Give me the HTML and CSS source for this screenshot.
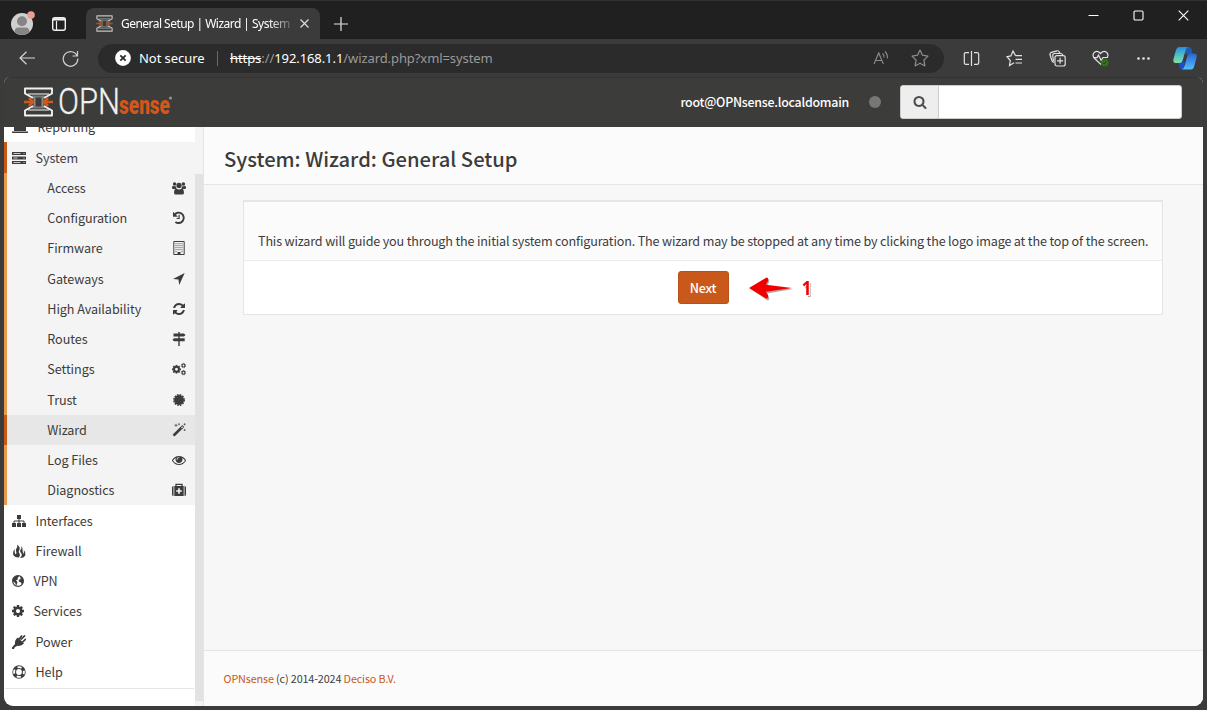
FILE: index.html
```html
<!DOCTYPE html>
<html lang="en">
<head>
<meta charset="utf-8">
<title>General Setup | Wizard | System</title>
<link rel="stylesheet" href="styles.css">
</head>
<body>
<svg class="defs" aria-hidden="true">
  <symbol id="mark" viewBox="0 0 29 30">
    <g fill="none">
      <path d="M4 7h21M4 23h21" stroke="#9a9a98" stroke-width="2.200"/>
      <path d="M8 9.500h13M8 20.500h13" stroke="#767674" stroke-width="2"/>
      <path d="M10.500 10v10M18.500 10v10" stroke="#8a8a88" stroke-width="2"/>
      <path d="M9 11 1 6.500V1.500h27v5L20 11M9 19l-8 4.500v5h27v-5L20 19" stroke="#f1f1f1" stroke-width="1.900" stroke-linejoin="round"/>
      <path d="M0 15h8M5 11l4 4-4 4M29 15h-8M24 11l-4 4 4 4" stroke="#d2571b" stroke-width="2.500"/>
    </g>
  </symbol>
  <symbol id="server" viewBox="0 0 14 14"><path d="M0 1h14v3H0zM0 5.500h14v3H0zM0 10h14v3H0z"/><path d="M1.500 2.500h7M1.500 7h4M1.500 11.500h7M11.500 2.500h1M11.500 7h1M11.500 11.500h1" stroke="#eee" stroke-width=".8"/></symbol>
  <symbol id="laptop" viewBox="0 0 16 14"><path d="M2 0h12v11H2zM0 11.500h16v1.500H0z"/></symbol>
  <symbol id="users" viewBox="0 0 15 14"><circle cx="2.800" cy="2.800" r="1.900"/><circle cx="12.200" cy="2.800" r="1.900"/><circle cx="7.500" cy="4.300" r="2.800"/><path d="M0 7q0-2.500 1.300-2.500 1.500 1 2.700.4Q4 6.500 5 7.300L3.500 8H1Q0 8 0 7zM15 7q0-2.500-1.300-2.500-1.500 1-2.700.4 0 1.600-1 2.400l1.500.7H14q1 0 1-1zM4.500 7.500q3 2 6 0Q12.800 8 12.800 12q0 2-1.800 2H4q-1.800 0-1.800-2 0-4 2.300-4.500z"/></symbol>
  <symbol id="history" viewBox="0 0 14 14"><path d="M2.200 4A5.200 5.200 0 1 1 3.400 11" fill="none" stroke="#3c3c3b" stroke-width="1.900"/><path d="M1 .8v5h5zM6.500 3.800h1.200v4.300H4.600V6.900h1.900z"/></symbol>
  <symbol id="building" viewBox="0 0 14 14"><path d="M1.800.5h10.400v13H1.800z" fill="none" stroke="#3c3c3b"/><path d="M4 2v9.500M6 2v8M8 2v8M10 2v9.500" stroke="#3c3c3b" stroke-width=".8" stroke-dasharray="1.200 .8"/><path d="M5.500 11h3v3h-3z"/></symbol>
  <symbol id="arrow" viewBox="0 0 14 14"><path d="M12.700 1 7.200 13 6.500 7.500 1 7z"/></symbol>
  <symbol id="refresh" viewBox="0 0 1792 1792"><path d="M1639 1056q0 5-1 7-64 268-268 434.500t-478 166.500q-146 0-282.500-55t-243.500-157l-129 129q-19 19-45 19t-45-19-19-45v-448q0-26 19-45t45-19h448q26 0 45 19t19 45-19 45l-137 137q71 66 161 102t187 36q134 0 250-65t186-179q11-17 53-117 8-23 30-23h192q13 0 22.500 9.500t9.500 22.500zm25-800v448q0 26-19 45t-45 19h-448q-26 0-45-19t-19-45 19-45l138-138q-148-137-349-137-134 0-250 65t-186 179q-11 17-53 117-8 23-30 23h-199q-13 0-22.500-9.500t-9.500-22.500v-7q65-268 270-434.500t480-166.500q146 0 284 55.500t245 156.500l130-129q19-19 45-19t45 19 19 45z"/></symbol>
  <symbol id="signs" viewBox="0 0 14 14"><path d="M6.300 0h1.400v14H6.300zM1.500 1.500h10.500l1.500 1.500L12 4.500H1.500zM2 6.300h10.700v3H2L.5 7.800z"/></symbol>
  <symbol id="cog" viewBox="128 128 1536 1536"><path d="M1152 896q0-106-75-181t-181-75-181 75-75 181 75 181 181 75 181-75 75-181zm512-109v222q0 12-8 23t-20 13l-185 28q-19 54-39 91 35 50 107 138 10 12 10 25t-9 23q-27 37-99 108t-94 71q-12 0-26-9l-138-108q-44 23-91 38-16 136-29 186-7 28-36 28h-222q-14 0-24.500-8.500t-11.500-21.500l-28-184q-49-16-90-37l-141 107q-10 9-25 9-14 0-25-11-126-114-165-168-7-10-7-23 0-12 8-23 15-21 51-66.500t54-70.500q-27-50-41-99l-183-27q-13-2-21-12.500t-8-23.500v-222q0-12 8-23t19-13l186-28q14-46 39-92-40-57-107-138-10-12-10-24 0-10 9-23 26-36 98.500-107.500t94.500-71.500q13 0 26 10l138 107q44-23 91-38 16-136 29-186 7-28 36-28h222q14 0 24.500 8.500t11.500 21.500l28 184q49 16 90 37l142-107q9-9 24-9 13 0 25 10 129 119 165 170 7 8 7 22 0 12-8 23-15 21-51 66.500t-54 70.500q26 50 41 98l183 28q13 2 21 12.500t8 23.500z"/></symbol>
  <symbol id="cogs" viewBox="0 0 15 14"><use href="#cog" x="0" y="2.500" width="9.600" height="9.600"/><g fill="none" stroke="#3c3c3b"><circle cx="12.300" cy="3.300" r="1.600" stroke-width="1.200"/><circle cx="12.300" cy="10.900" r="1.600" stroke-width="1.200"/><circle cx="12.300" cy="3.300" r="2.400" stroke-width=".8" stroke-dasharray="1 .9"/><circle cx="12.300" cy="10.900" r="2.400" stroke-width=".8" stroke-dasharray="1 .9"/></g></symbol>
  <symbol id="cert" viewBox="0 0 14 14"><circle cx="7" cy="7" r="5"/><circle cx="7" cy="7" r="5.300" fill="none" stroke="#3c3c3b" stroke-width="1.300" stroke-dasharray="1.700 1.075"/></symbol>
  <symbol id="wand" viewBox="0 0 14 14"><path d="M.6 11.800 10.300 2l1.900 1.900L2.500 13.600z"/><path d="m9 4.500 1.300-1.200.8.800-1.200 1.200z" fill="#e8e8e8"/><path d="M4 .8v3M2.500 2.300h3M7 .3v1.800M6.200 1.200h1.700M12.600.3v2M11.600 1.300h2M12.600 6v2M11.600 7h2" stroke="#3c3c3b" stroke-width=".7"/></symbol>
  <symbol id="eye" viewBox="0 0 1792 1792"><path d="M1664 960q-152-236-381-353 61 104 61 225 0 185-131.500 316.500t-316.500 131.500-316.500-131.500-131.500-316.500q0-121 61-225-229 117-381 353 133 205 333.500 326.500t434.500 121.500 434.500-121.500 333.500-326.500zm-720-384q0-20-14-34t-34-14q-125 0-214.500 89.500t-89.500 214.500q0 20 14 34t34 14 34-14 14-34q0-86 61-147t147-61q20 0 34-14t14-34zm848 384q0 34-20 69-140 230-376.500 368.500t-499.500 138.500-499.500-139-376.500-368q-20-35-20-69t20-69q140-229 376.500-368t499.500-139 499.500 139 376.500 368q20 35 20 69z"/></symbol>
  <symbol id="medkit" viewBox="0 0 14 14"><path d="M4 3.500V1.300h6v2.200" fill="none" stroke="#3c3c3b" stroke-width="1.300"/><path d="M1.500 3v10Q0 13 0 11.500v-7Q0 3 1.500 3zM12.500 3v10q1.500 0 1.500-1.500v-7Q14 3 12.500 3zM2.300 3h9.400v10H2.300z"/><path d="M7 5.200v5.600M4.200 8h5.600" stroke="#f4f4f4" stroke-width="1.700"/></symbol>
  <symbol id="sitemap" viewBox="0 0 14 14"><path d="M5 1h4v4H5zM0 9h4v4H0zM5 9h4v4H5zM10 9h4v4h-4z"/><path d="M7 4v6M2 10V7h10v3" fill="none" stroke="#3c3c3b"/></symbol>
  <symbol id="fire" viewBox="0 0 14 14"><path d="M5 .5Q8.500 3 7.500 5.500 6 8 7.500 9.500 8.700 11 7 13.500 2 13.500 1 10 .5 7 3 5q-1 4 .8 5.500Q5 9 4 7 3.600 5 5 3.500 5.800 2 5 .5z"/><path d="M9 2q2 1.500 1.500 4 .1 2 1 4 1-1.500.2-4Q14 8 13.400 11q-1 3-5.400 3Q11 11 9 9q-2-2 .4-4.500Q9.700 3 9 2z"/></symbol>
  <symbol id="globe" viewBox="0 0 12 14"><circle cx="6" cy="7" r="5.400" fill="#fff" stroke="#3c3c3b" stroke-width="1.200"/><path d="M.7 5Q2 2 6 1.500l1 1L5.500 4 6 5.200 4 6.500 5.500 8 4.800 10.500 4 12 3.200 9 1 7.500zM8 1.500l3 3L11.500 8 10 11l-1-2.500-2-.7L6.700 6l2-1z"/></symbol>
  <symbol id="plug" viewBox="0 0 14 14"><path d="m9.200 4.200 3.300-3.300M10.800 6.800l2.700-2.500M7.700 3.500 9.500 1" stroke="#3c3c3b" stroke-width="1.600" stroke-linecap="round"/><path d="m6 2.500 6 6Q9 11.500 5.500 10.800L2.800 12.300 2 14H0v-1.500L3 9Q2.300 5 6 2.500z"/></symbol>
  <symbol id="ring" viewBox="0 0 14 14"><circle cx="7" cy="7" r="4.800" fill="none" stroke="#3c3c3b" stroke-width="3.800"/><circle cx="7" cy="7" r="4.900" fill="none" stroke="#fff" stroke-width="1.900" stroke-dasharray="4.200 3.497" stroke-dashoffset="2.100"/></symbol>
  <symbol id="search" viewBox="0 0 1792 1792"><path d="M1216 832q0-185-131.500-316.500T768 384 451.500 515.500 320 832t131.500 316.500T768 1280t316.500-131.500T1216 832zm512 832q0 52-38 90t-90 38q-54 0-90-38l-343-342q-179 124-399 124-143 0-273.500-55.500t-225-150-150-225T64 832t55.500-273.500 150-225 225-150T768 128t273.500 55.500 225 150 150 225T1472 832q0 220-124 399l343 343q37 37 37 90z"/></symbol>
</svg>

<div class="window">
  <div class="tabstrip">
    <svg class="avatar" viewBox="0 0 24 24"><circle cx="11" cy="13" r="11" fill="#d0d0d0"/><circle cx="11" cy="10.200" r="5" fill="#858585"/><path d="M3.500 21q0-4.500 4-4.500h7q4 0 4 4.500a11 11 0 0 1-15 0z" fill="#858585"/><circle cx="20" cy="4" r="3.800" fill="#ee9d94"/></svg>
    <svg class="spaces" viewBox="0 0 14 14" fill="none" stroke="#f0f0f0"><rect x=".7" y=".7" width="12.600" height="12.600" rx="2" stroke-width="1.400"/><path d="M1 2.300h12" stroke-width="2.400"/><path d="M4.500 4v9" stroke-width="1.200"/></svg>
    <div class="tab">
      <svg class="favicon"><use href="#mark"/></svg>
      <span class="tab-title">General Setup | Wizard | System |</span>
      <svg class="tab-close" viewBox="0 0 9 9"><path d="M.5.5l8 8M8.500.5l-8 8" stroke="#ddd" stroke-width="1.200"/></svg>
    </div>
    <svg class="newtab" viewBox="0 0 14 14"><path d="M7 0v14M0 7h14" stroke="#e6e6e6" stroke-width="1.200"/></svg>
    <div class="controls">
      <svg viewBox="0 0 11 11"><path d="M.5 5.500h10" stroke="#fff"/></svg>
      <svg viewBox="0 0 11 11"><rect x="1" y="1" width="9" height="9" rx="1.200" fill="none" stroke="#fff" stroke-width="1.100"/></svg>
      <svg viewBox="0 0 11 11"><path d="M.7.7l9.600 9.600M10.300.7.7 10.300" stroke="#fff" stroke-width="1.100"/></svg>
    </div>
  </div>

  <div class="toolbar">
    <svg class="back" viewBox="0 0 17 14" fill="none" stroke="#d5d5d5" stroke-width="1.200"><path d="M16 7H1M7.500.7 1 7l6.500 6.300"/></svg>
    <svg class="reload" viewBox="0 0 17 17" fill="none" stroke="#d0d0d0" stroke-width="1.200"><path d="M15.200 6A7.300 7.300 0 1 0 15.800 8.500M15.500 1v5h-5"/></svg>
    <div class="address">
      <svg class="insecure" viewBox="0 0 16 16"><circle cx="8" cy="8" r="7.900" fill="#fff"/><path d="m5.300 5.300 5.400 5.400M10.700 5.300l-5.400 5.400" stroke="#2b2b2b" stroke-width="1.800"/></svg>
      <span class="secure-text">Not secure</span>
      <span class="divider"></span>
      <span class="url"><s>https</s><i>://</i>192.168.1.1<i>/wizard.php?xml=system</i></span>
      <svg class="read" viewBox="0 0 16 16" fill="none" stroke="#8c8c8c" stroke-width="1.100"><path d="M1 14 5.700 3l4.700 11M2.700 10.500h6M9.500 3.500q2 1.500 1.500 4M12 1.500q3 3 2.300 7"/></svg>
      <svg class="star" viewBox="0 0 17 17" fill="none" stroke="#8c8c8c" stroke-width="1.200" stroke-linejoin="round"><path d="m8.500 1 2.300 4.900 5.200.8-3.800 3.800.9 5.500-4.600-2.600L3.900 16l.9-5.500L1 6.700l5.200-.8z"/></svg>
    </div>
    <div class="tools">
      <svg viewBox="0 0 17 17" fill="none" stroke="#e2e2e2" stroke-width="1.200"><path d="M6 2.600H3Q1.300 2.600 1.300 4.300v8.400q0 1.700 1.700 1.700h3M11 2.600h3q1.700 0 1.700 1.700v8.400q0 1.700-1.700 1.700h-3M8.500 1v15"/></svg>
      <svg viewBox="0 0 17 17" fill="none" stroke="#e2e2e2" stroke-width="1.200"><path d="M9.500 5.600 7 1 4.900 5.900 1 6.700l3.300 3.800-.8 5L8 12.800M9.500 5.600H16M9.500 9.300H16M9.500 13H16"/></svg>
      <svg viewBox="0 0 17 17" fill="none" stroke="#e2e2e2" stroke-width="1.200"><rect x="6" y="5.600" width="10.200" height="10.400" rx="2"/><path d="M11.100 7.800v6M8.100 10.800h6M5 12.300Q3.400 12 2.900 10.500L1 4.800Q.7 3 2.400 2.400L8 .8q1.700-.3 2.400 1.400l.4 1.300M4.500 11 3.700 5.500q0-2 2-2h6q1.500 0 2 1.500"/></svg>
      <svg viewBox="0 0 17 17" fill="none" stroke="#e2e2e2" stroke-width="1.200"><path d="M9 14.500 2.300 8.300M1.500 7Q.2 4 2.500 2.200q3-2 6 1.300 3-3.300 6-1.300Q17 4.500 15.200 7.500M1 7.700h4L6.500 5l2.700 5.500 1.800-3h5"/><circle cx="12.700" cy="12.700" r="3.800" fill="#2e7315" stroke="none"/><path d="m11 12.800 1.200 1.100 2-2.400" stroke="#1b3b10" stroke-width=".8"/></svg>
      <svg viewBox="0 0 17 17" fill="#e7e7e7"><circle cx="3.500" cy="8.500" r="1.300"/><circle cx="8.500" cy="8.500" r="1.300"/><circle cx="13.500" cy="8.500" r="1.300"/></svg>
    </div>
    <svg class="copilot" viewBox="0 0 24 23">
      <defs><linearGradient id="ca" x1="0" y1="0" x2="0" y2="1"><stop offset="0" stop-color="#2a8de0"/><stop offset=".6" stop-color="#58c8c5"/><stop offset="1" stop-color="#8ade94"/></linearGradient><linearGradient id="cb" x1="0" y1="0" x2="0" y2="1"><stop offset="0" stop-color="#2864da"/><stop offset="1" stop-color="#55bff8"/></linearGradient></defs>
      <path d="M5 15h7l-2 7q-2 .5-3-1z" fill="#1b4fd1"/><path d="M13 0h3q2 0 2.500 2l1 5h-8z" fill="#1e5cb0"/>
      <path d="M6 0h9q-2 1-3 5L9.500 14q-.8 2-3 2H2.500q-3 0-2-4L3 3Q4 0 6 0z" fill="url(#ca)"/>
      <path d="M17.500 6.500h4q3 0 2 4L21 20q-1 2.500-3 2.500H9q2-1 3-5l2.500-9q.8-2 3-2z" fill="url(#cb)"/>
    </svg>
  </div>

  <div class="page">
    <header class="header">
      <svg class="logo" viewBox="0 0 150 32">
        <use href="#mark" x="0" y="1" width="29" height="30"/>
        <text class="logo-opn" x="34" y="28" textLength="62" lengthAdjust="spacingAndGlyphs">OPN</text>
        <text class="logo-sense" x="95" y="28" textLength="51" lengthAdjust="spacingAndGlyphs">sense</text>
        <circle cx="146.500" cy="12" r="1.600" fill="#92928f"/>
      </svg>
      <span class="user">root@OPNsense.localdomain</span>
      <span class="status"></span>
      <div class="searchbox"><span class="search-btn"><svg><use href="#search"/></svg></span></div>
    </header>
    <div class="body">
      <aside class="sidebar">
        <nav class="menu">
          <div class="item reporting"><svg><use href="#laptop"/></svg><span>Reporting</span></div>
          <div class="item active"><svg><use href="#server"/></svg><span>System</span></div>
          <div class="submenu">
            <div class="sub"><span>Access</span><svg><use href="#users"/></svg></div>
            <div class="sub"><span>Configuration</span><svg><use href="#history"/></svg></div>
            <div class="sub"><span>Firmware</span><svg><use href="#building"/></svg></div>
            <div class="sub"><span>Gateways</span><svg><use href="#arrow"/></svg></div>
            <div class="sub"><span>High Availability</span><svg><use href="#refresh"/></svg></div>
            <div class="sub"><span>Routes</span><svg><use href="#signs"/></svg></div>
            <div class="sub"><span>Settings</span><svg><use href="#cogs"/></svg></div>
            <div class="sub"><span>Trust</span><svg><use href="#cert"/></svg></div>
            <div class="sub current"><span>Wizard</span><svg><use href="#wand"/></svg></div>
            <div class="sub"><span>Log Files</span><svg><use href="#eye"/></svg></div>
            <div class="sub"><span>Diagnostics</span><svg><use href="#medkit"/></svg></div>
          </div>
          <div class="item"><svg><use href="#sitemap"/></svg><span>Interfaces</span></div>
          <div class="item"><svg><use href="#fire"/></svg><span>Firewall</span></div>
          <div class="item narrow"><svg><use href="#globe"/></svg><span>VPN</span></div>
          <div class="item narrow"><svg><use href="#cog"/></svg><span>Services</span></div>
          <div class="item"><svg><use href="#plug"/></svg><span>Power</span></div>
          <div class="item"><svg><use href="#ring"/></svg><span>Help</span></div>
          <div class="rule"></div>
        </nav>
        <div class="scroll"><div class="thumb"></div></div>
      </aside>
      <main class="main">
        <div class="heading"><h1>System: Wizard: General Setup</h1></div>
        <div class="content">
          <section class="panel">
            <p class="intro">This wizard will guide you through the initial system configuration. The wizard may be stopped at any time by clicking the logo image at the top of the screen.</p>
            <div class="actions">
              <button class="next">Next</button>
              <div class="callout">
                <svg class="red-arrow" viewBox="0 0 46 26"><path d="M2 13 19 3q2 0 1.500 3l-2 4 26 3-26 4.500 2 4q.5 3-1.500 3z" fill="#777" transform="translate(.7 1)" opacity=".6"/><path d="M1 13 18.500 2.500q2.500 0 1.500 3.500L18 9.800l26 3.200-26 3.800 2 3.500q.5 3-1.500 3.500z" fill="#f20000"/></svg>
                <span class="num">1</span>
              </div>
            </div>
          </section>
        </div>
        <footer class="footer"><a>OPNsense</a> (c) 2014-2024 <a>Deciso B.V.</a></footer>
      </main>
    </div>
  </div>
</div>
</body>
</html>
```
FILE: styles.css
```css
* { box-sizing: border-box; }
body { margin: 0; }
svg { display: block; flex: none; }
.defs { position: absolute; width: 0; height: 0; }

.window {
  width: 1207px; height: 710px; overflow: hidden;
  display: flex; flex-direction: column;
  background: #3b3b3b; border-top: 1px solid #303234;
  font-family: "Noto Sans", "Open Sans", sans-serif; color: #fff;
}

/* Browser frame */
.tabstrip { height: 38px; background: #202020; display: flex; align-items: center; padding: 7px 0 0 11px; }
.avatar { width: 24px; height: 24px; margin-top: -1px; }
.spaces { width: 14px; height: 14px; margin: 1px 0 0 17px; }
.tab {
  width: 234px; height: 31px; margin-left: 20px; padding: 0 11px 0 10px;
  display: flex; align-items: center; background: #3b3b3b; border-radius: 8px 8px 0 0;
}
.favicon { width: 17px; height: 17px; opacity: .75; }
.tab-title {
  margin-left: 8px; width: 171px; overflow: hidden; white-space: nowrap;
  font-size: 12px; letter-spacing: -.53px; line-height: 18px;
  -webkit-mask-image: linear-gradient(90deg, #000 148px, rgba(0,0,0,.2) 170px);
  mask-image: linear-gradient(90deg, #000 148px, rgba(0,0,0,.2) 170px);
}
.tab-close { width: 9px; height: 9px; margin-left: 8px; }
.newtab { width: 14px; height: 14px; margin-left: 14px; }
.controls { margin: -17px 18px 0 auto; display: flex; gap: 34px; }
.controls svg { width: 11px; height: 11px; }

.toolbar { height: 38px; display: flex; align-items: center; padding-left: 19px; }
.back { width: 17px; height: 14px; }
.reload { width: 17px; height: 17px; margin-left: 26px; }
.address {
  width: 846px; height: 29px; margin-left: 19px; padding: 0 15px 0 17px; border-radius: 15px;
  background: #2b2b2b; display: flex; align-items: center; font-size: 13px; line-height: 20px; white-space: nowrap;
}
.insecure { width: 16px; height: 16px; }
.secure-text { margin-left: 8px; width: 66px; letter-spacing: -.05px; }
.divider { width: 1px; height: 15px; margin: 0 12px; background: #696969; }
.url { letter-spacing: -.08px; }
.url i { font-style: normal; color: #9a9a9a; }
.read { width: 16px; height: 16px; margin-left: auto; }
.star { width: 18px; height: 18px; margin-left: 22px; }
.tools { display: flex; gap: 26px; margin-left: 19px; }
.tools svg { width: 17px; height: 17px; }
.copilot { width: 24px; height: 23px; margin-left: 21px; }

/* Web page */
.page {
  width: 1199px; height: 629px; margin-left: 4px; overflow: hidden;
  display: flex; flex-direction: column; border-radius: 6px 6px 9px 9px;
  font-family: "Noto Sans CJK SC", "Source Sans Pro", sans-serif; color: #3c3c3b; background: #fff;
}
.header { height: 50px; flex: none; display: flex; align-items: center; background: #3c3c3b; border-top: 1px solid #333; padding: 0 21px 1px 20px; }
.logo { width: 150px; height: 32px; }
.logo-opn { font: 300 36px Roboto, sans-serif; fill: #f1f1f1; stroke: #f1f1f1; stroke-width: .3px; }
.logo-sense { font: 900 25px Roboto, sans-serif; fill: #d2571b; }
.user { margin-left: auto; color: #fff; font-size: 12.4px; font-weight: 500; line-height: 20px; letter-spacing: -.24px; }
.status { width: 12px; height: 12px; border-radius: 50%; background: #777; margin: 0 19px 0 20px; }
.searchbox { width: 282px; height: 34px; background: #fff; border: 1px solid #ccc; border-radius: 3px; display: flex; overflow: hidden; }
.search-btn { width: 38px; background: #eee; border-right: 1px solid #ccc; display: flex; align-items: center; justify-content: center; }
.search-btn svg { width: 14px; height: 14px; fill: #4d4d4c; }

.body { flex: 1; min-height: 0; display: flex; }
.sidebar { width: 200px; flex: none; display: flex; border-right: 1px solid #e5e5e5; }
.menu { width: 191px; font-size: 12.6px; line-height: 30px; letter-spacing: -.06px; overflow: hidden; }
.menu svg { width: 14px; height: 14px; fill: #3c3c3b; }
.item { height: 30.25px; padding: .6px 0 0 8px; display: flex; align-items: center; gap: 9.5px; }
.menu .narrow svg { width: 12px; height: 14px; }
.reporting { margin-top: -15px; }
.menu .reporting svg { width: 16px; }
.active { background: #f4f4f4; border-left: 3px solid #c9581b; padding-left: 5px; }
.submenu { background: #f4f4f4; }
.sub { height: 30.25px; border-left: 3px solid #e9984f; padding: .6px 9.5px 0 40.3px; display: flex; align-items: center; justify-content: space-between; }
.current { background: #e7e7e7; border-color: #c9581b; }
.rule { margin: 1px 1px 0; border-top: 1px solid #e5e5e5; }
.scroll { width: 8px; background: #f4f4f4; padding: 47px 0 5px; }
.thumb { height: 100%; background: #e2e2e2; }

.main { flex: 1; min-width: 0; display: flex; flex-direction: column; background: #f7f7f7; }
.heading { height: 58px; padding: 19px 0 0 20px; background: #fbfbfb; border-bottom: 1px solid #e5e5e5; }
h1 { margin: 0; font-size: 20.2px; line-height: 26px; font-weight: 500; }
.content { flex: 1; padding: 15px 40px 0 39px; }
.panel { height: 115px; border: 1px solid #e5e5e5; border-top-width: 2px; background: #fff; }
.intro { margin: 0; height: 59px; padding: 29px 0 0 14px; font-size: 12.6px; line-height: 20px; letter-spacing: -.158px; white-space: nowrap; background: #fbfbfb; border-bottom: 1px solid #ebebeb; }
.actions { position: relative; height: 53px; display: flex; align-items: center; justify-content: center; }
.next { width: 51px; height: 33px; padding: 0; border: 1px solid #b85018; border-radius: 3px; background: #c9581b; color: #fff; font: 500 12.6px/20px "Noto Sans CJK SC", sans-serif; letter-spacing: -.2px; }
.callout { position: absolute; left: 504px; top: 14px; display: flex; align-items: center; }
.red-arrow { width: 46px; height: 26px; }
.num { margin-left: 7px; font: bold 20px/26px "Open Sans", sans-serif; color: #f20000; text-shadow: 1px 1px 0 #fff, 2px 2px 1px #999; transform: scaleX(.85); }
.footer { height: 56px; padding: 17px 0 0 19.5px; font-size: 10.8px; line-height: 20px; letter-spacing: -.13px; background: #fbfbfb; border-top: 1px solid #e5e5e5; }
.footer a { color: #c9581b; }
```
